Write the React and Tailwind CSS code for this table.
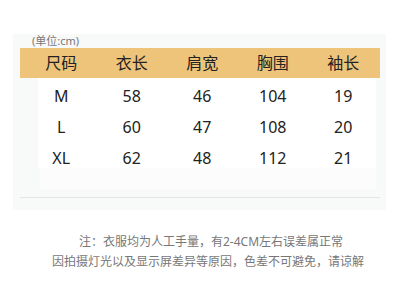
import React from 'react';

// 尺码表数据
const headers = ['尺码', '衣长', '肩宽', '胸围', '袖长'];
const rows = [
  ['M', '58', '46', '104', '19'],
  ['L', '60', '47', '108', '20'],
  ['XL', '62', '48', '112', '21'],
];

const font = { fontFamily: '"Noto Sans", "Noto Sans CJK SC", sans-serif' };

export default function App() {
  return (
    <div className="w-[400px] h-[295px] bg-white overflow-hidden" style={font}>
      {/* size table panel */}
      <div className="mt-[34px] ml-[13px] w-[373px] h-[176px] bg-[#f8f9f9] flex flex-col">
        <div className="h-[14px] pl-[19px] text-[11px] leading-[14px] text-[#777]">(单位:cm)</div>

        <div className="ml-[7px] w-[360px] h-[30px] bg-[#eec47b] grid grid-cols-[repeat(5,70.5px)] pl-[6px] items-center">
          {headers.map((h) => (
            <div key={h} className="text-center text-[16px] text-[#222]">{h}</div>
          ))}
        </div>

        <div className="ml-[25px] w-[338px] h-[90px] bg-white">
          <div className="ml-[-12px] pt-[2px]">
            {rows.map((r) => (
              <div key={r[0]} className="grid grid-cols-[repeat(5,70.5px)] h-[31px] items-center">
                {r.map((c, i) => (
                  <div key={i} className="text-center text-[16px] text-[#222]">{c}</div>
                ))}
              </div>
            ))}
          </div>
        </div>

        <div className="ml-[27px] w-[336px] h-[21px] bg-[#fcfcfc]"></div>
        <div className="mt-[8px] ml-[7px] w-[360px] h-px bg-[#e4e4e4]"></div>
      </div>

      {/* footnote */}
      <div className="mt-[22px] text-[12px] leading-[20px] text-[#777] text-center">
        <p className="pl-[22px]">注：衣服均为人工手量，有2-4CM左右误差属正常</p>
        <p className="pl-[16px]">因拍摄灯光以及显示屏差异等原因，色差不可避免，请谅解</p>
      </div>
    </div>
  );
}
